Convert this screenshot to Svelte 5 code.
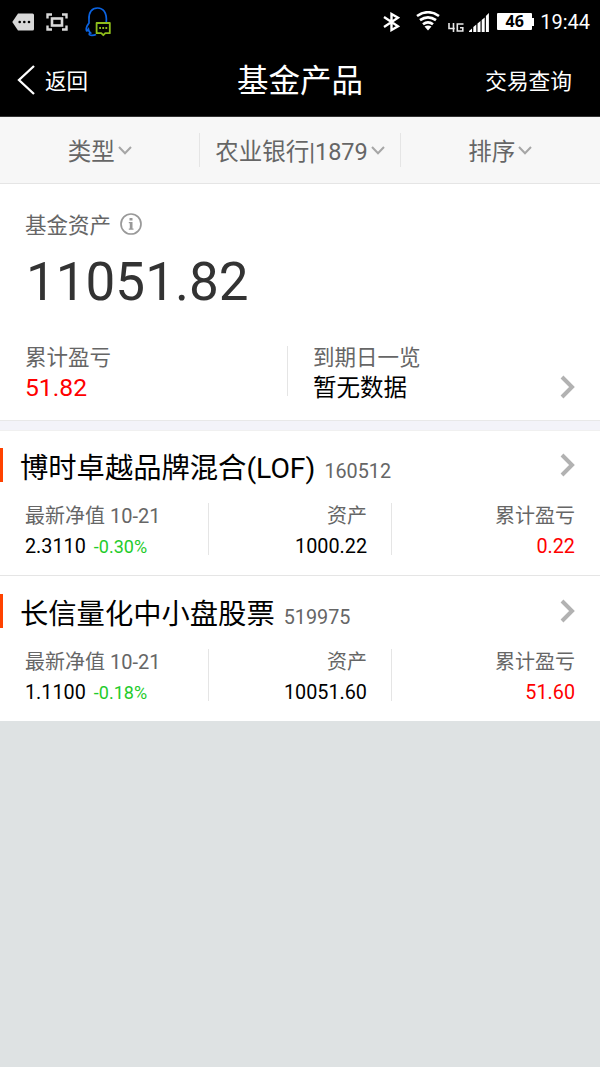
<script lang="ts">
  interface Fund {
    name: string;
    code: string;
    date: string;
    nav: string;
    change: string;
    asset: string;
    profit: string;
  }

  const filters = ['类型', '农业银行|1879', '排序'];

  const funds: Fund[] = [
    { name: '博时卓越品牌混合(LOF)', code: '160512', date: '10-21', nav: '2.3110', change: '-0.30%', asset: '1000.22', profit: '0.22' },
    { name: '长信量化中小盘股票', code: '519975', date: '10-21', nav: '1.1100', change: '-0.18%', asset: '10051.60', profit: '51.60' },
  ];
</script>

{#snippet chevron()}
  <svg class="chevron" width="16" height="24" viewBox="0 0 16 24" fill="none" stroke="#b2b2b2" stroke-width="4" aria-hidden="true">
    <polyline points="2,2 12,12 2,22"/>
  </svg>
{/snippet}

<div class="screen">
  <div class="status">
    <svg width="22" height="18" viewBox="0 0 22 18" aria-hidden="true">
      <path d="M6 .5h14.5q1.500 0 1.500 1.500v14q0 1.500-1.500 1.500H6L.3 9z" fill="#d8d8d8"/>
      <g fill="#000"><circle cx="7.700" cy="9" r="1.300"/><circle cx="12.300" cy="9" r="1.300"/><circle cx="17" cy="9" r="1.300"/></g>
    </svg>
    <svg class="scan" width="22" height="18" viewBox="0 0 22 18" fill="none" stroke="#d8d8d8" aria-hidden="true">
      <path d="M1.500 5.500V1.500H6M16 1.500h4.500v4M20.500 12.500v4H16M6 16.500H1.500v-4" stroke-width="2.400"/>
      <rect x="6" y="5.500" width="10" height="7" stroke-width="2.600"/>
    </svg>
    <svg class="qq" width="27" height="30" viewBox="0 0 27 30" fill="none" aria-hidden="true">
      <path d="M4 12.500C3.500 5 7 1 12.500 1s9.500 4 8.800 14M4 12.500v3.500C2 18.500 1 20.500 1.300 23c.2 1.600 1.300.8 2.200-.7.3 1.700 1 2.700 2 3.600-1.600.6-2 2 0 2.300 2 .2 4 0 5.500-.8" stroke="#0b63e0" stroke-width="1.700"/>
      <path d="M11.600 16h13.200v10.200h-4.500l-2 2-2-2h-4.700z" fill="#000" stroke="#8fbe1c" stroke-width="1.800" stroke-linejoin="round"/>
      <path d="M14.200 21h1.800M17.300 21h1.800M20.400 21h1.800" stroke="#8fbe1c" stroke-width="1.800"/>
    </svg>
    <div class="status-right">
      <svg class="bt" width="17" height="20" viewBox="0 0 17 20" fill="none" stroke="#fff" stroke-width="2.400" aria-hidden="true">
        <path d="M1 5l14 9.300L8.500 18V2L15 5.700 1 15"/>
      </svg>
      <svg class="wifi" width="24" height="20" viewBox="0 0 24 20" fill="none" stroke="#fff" stroke-width="2.700" aria-hidden="true">
        <path d="M1 5Q12-2.500 23 5M4 9.200q8-5.800 16 0M7 13.200q5-3.800 10 0"/>
        <path d="M8.500 15.500q3.500-1.800 7 0L12 19.500z" fill="#fff" stroke="none"/>
      </svg>
      <svg class="net" width="16" height="9" viewBox="0 0 16 9" fill="none" stroke="#e8e8e8" stroke-width="1.600" aria-hidden="true">
        <path d="M1 0v5.500h5.800M5.500 0v9M15.500 1H9.300v7h5.500V4.800H12"/>
      </svg>
      <svg class="signal" width="20" height="20" viewBox="0 0 20 20" fill="#fff" aria-hidden="true">
        <path d="M0 20v-1l3-2.500V20zM4.300 20v-5l3-2.500V20zM8.500 20v-8.500l3-2.500v11zM12.700 20V8l3-2.500V20zM16.900 20V4l3-3v19z"/>
      </svg>
      <div class="battery">46</div>
      <span class="clock">19:44</span>
    </div>
  </div>

  <header>
    <div class="back">
      <svg width="18" height="30" viewBox="0 0 18 30" fill="none" stroke="#fff" stroke-width="2.300" aria-hidden="true">
        <polyline points="17,1 2,15 17,29"/>
      </svg>
      <span>返回</span>
    </div>
    <h1>基金产品</h1>
    <div class="query">交易查询</div>
  </header>

  <div class="filters">
    {#each filters as filter}
      <div class="filter">
        <span>{filter}</span>
        <svg width="14" height="9" viewBox="0 0 14 9" fill="none" stroke="#a6a6a6" stroke-width="2" aria-hidden="true">
          <polyline points="1,1 7,7.300 13,1"/>
        </svg>
      </div>
    {/each}
  </div>

  <section class="summary">
    <div class="total-label">
      <span>基金资产</span>
      <svg width="22" height="22" viewBox="0 0 22 22" aria-hidden="true">
        <circle cx="11" cy="11" r="10" fill="none" stroke="#999" stroke-width="1.700"/>
        <path d="M9.500 5h3v2.400h-3zM8.800 9h3.700v6.500h1v1.300H8.800v-1.300h1v-5.200h-1z" fill="#999"/>
      </svg>
    </div>
    <div class="total">11051.82</div>
    <div class="halves">
      <div class="half">
        <div class="half-label">累计盈亏</div>
        <div class="gain">51.82</div>
      </div>
      <div class="half due">
        <div>
          <div class="half-label">到期日一览</div>
          <div class="none">暂无数据</div>
        </div>
        {@render chevron()}
      </div>
    </div>
  </section>

  {#each funds as fund}
    <section class="fund">
      <div class="fund-head">
        <h2>{fund.name}</h2>
        <span class="code">{fund.code}</span>
        {@render chevron()}
      </div>
      <div class="cols">
        <div class="col nav">
          <div class="label">最新净值 {fund.date}</div>
          <div class="value">{fund.nav}<span class="change">{fund.change}</span></div>
        </div>
        <div class="col asset">
          <div class="label">资产</div>
          <div class="value">{fund.asset}</div>
        </div>
        <div class="col profit">
          <div class="label">累计盈亏</div>
          <div class="value red">{fund.profit}</div>
        </div>
      </div>
    </section>
  {/each}
</div>

<style>
  :global(body) { background: #dee2e3; }

  .screen {
    font-family: Roboto, "Noto Sans CJK SC", sans-serif;
    color: #000;
    width: 600px;
    white-space: nowrap;
  }

  .screen * { box-sizing: border-box; }
  svg { display: block; flex: none; }

  /* Status bar */
  .status {
    display: flex;
    align-items: center;
    height: 43px;
    padding: 0 10px 0 12px;
    background: #000;
    color: #fff;
  }
  .scan { margin-left: 12px; }
  .qq { margin-left: 17px; }

  .status-right {
    display: flex;
    align-items: center;
    margin-left: auto;
  }
  .wifi { margin: 0 0 1px 16px; }
  .net { margin: 11px 0 0 8px; }
  .signal { margin-left: 5px; }

  .battery {
    width: 35px;
    height: 17px;
    margin-left: 8px;
    background: #fff;
    color: #000;
    border-radius: 1px;
    font-family: "Noto Sans", sans-serif;
    font-size: 16px;
    font-weight: 700;
    line-height: 17px;
    text-align: center;
  }
  .battery + .clock::before {
    content: "";
    width: 2px;
    height: 8px;
    margin-right: 6px;
    background: #fff;
  }
  .clock {
    display: flex;
    align-items: center;
    font-size: 20px;
    line-height: 24px;
  }

  /* Title bar */
  header {
    display: grid;
    grid-template-columns: 1fr auto 1fr;
    align-items: center;
    height: 74px;
    padding: 0 28px 0 17px;
    background: #000;
    color: #fff;
    border-bottom: 1px solid #333;
  }
  .back {
    display: flex;
    align-items: center;
    gap: 10px;
    font-size: 21.5px;
  }
  h1 {
    margin: 4px 0 0 11px;
    font-size: 31.5px;
    font-weight: 400;
    line-height: 40px;
  }
  .query {
    font-size: 21.7px;
    text-align: right;
  }

  /* Filters */
  .filters {
    display: flex;
    align-items: center;
    height: 67px;
    background: #f7f7f7;
    border-bottom: 1px solid #e5e5e5;
  }
  .filter {
    display: flex;
    align-items: center;
    justify-content: center;
    gap: 3px;
    flex: 1;
    height: 34px;
    font-size: 23.5px;
    color: #666;
    border-right: 1px solid #e5e5e5;
  }
  .filter:last-child { border-right: none; }

  /* Summary */
  .summary {
    height: 237px;
    padding-top: 24px;
    background: #fff;
    border-bottom: 1px solid #e8e8e8;
  }
  .total-label {
    display: flex;
    align-items: center;
    gap: 9px;
    height: 32px;
    padding-left: 25px;
    font-size: 21.5px;
    color: #666;
  }
  .total-label span { margin-top: -2px; }
  .total {
    height: 84px;
    padding-left: 26px;
    font-size: 53px;
    line-height: 84px;
    color: #333;
  }
  .halves {
    display: flex;
    margin-top: 22px;
  }
  .half {
    width: 288px;
    height: 50px;
    padding-left: 25px;
    border-right: 1px solid #e5e5e5;
  }
  .half-label {
    font-size: 21.5px;
    line-height: 23px;
    color: #666;
  }
  .gain {
    margin-top: 4px;
    font-size: 24.7px;
    line-height: 30px;
    color: #f00;
  }
  .due {
    display: flex;
    justify-content: space-between;
    width: 312px;
    padding-right: 24px;
    border-right: none;
  }
  .due .half-label { line-height: 24px; }
  .due .chevron { margin-top: 29px; }
  .none {
    font-size: 23.5px;
    line-height: 37px;
  }

  /* Funds */
  .fund {
    height: 146px;
    background: #fff;
    border-bottom: 1px solid #e5e5e5;
  }
  .summary + .fund {
    height: 155px;
    border-top: 9px solid #f3f3f9;
    box-shadow: inset 0 1px 0 #f0f0f0;
  }
  .fund:last-child { border-bottom-color: #dee2e3; }

  .fund-head {
    display: flex;
    align-items: baseline;
    height: 73px;
    padding: 18px 24px 0 0;
  }
  .fund-head::before {
    content: "";
    align-self: flex-start;
    width: 3px;
    height: 34px;
    background: #ff4200;
  }
  h2 {
    margin: 0 0 0 17px;
    font-size: 28.3px;
    font-weight: 400;
    line-height: 41px;
  }
  .code {
    margin-left: 9px;
    font-size: 19.8px;
    color: #666;
  }
  .fund-head .chevron {
    align-self: flex-start;
    margin: 5px 0 0 auto;
  }

  .cols { display: flex; }
  .col {
    height: 52px;
    font-size: 20px;
    text-align: right;
    border-right: 1px solid #e5e5e5;
  }
  .nav {
    width: 209px;
    padding-left: 25px;
    text-align: left;
  }
  .asset {
    width: 183px;
    padding-right: 24px;
  }
  .profit {
    flex: 1;
    padding-right: 25px;
    border-right: none;
  }
  .label {
    line-height: 26px;
    color: #666;
  }
  .value {
    margin-top: 4px;
    font-size: 19.8px;
    line-height: 28px;
  }
  .change {
    margin-left: 8px;
    font-size: 18px;
    color: #1fcb2b;
  }
  .red { color: #f00; }
</style>
